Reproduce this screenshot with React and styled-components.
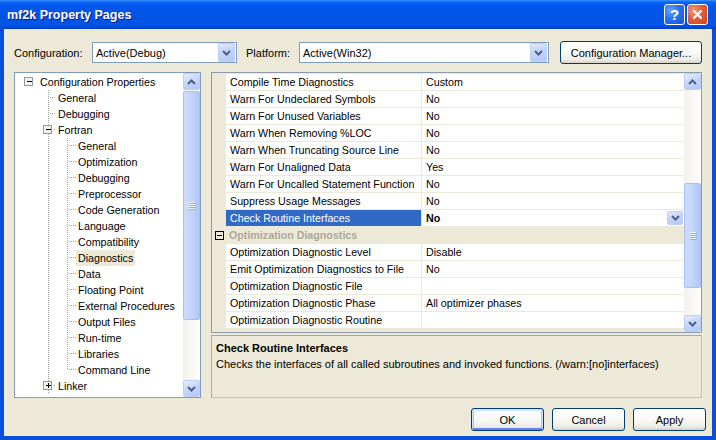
import React from "react";
import styled, { createGlobalStyle } from "styled-components";

const GlobalStyle = createGlobalStyle`
  html, body {
    margin: 0;
    padding: 0;
    background: #0054e3;
  }
  body {
    font-family: "Liberation Sans", Arial, sans-serif;
    font-size: 10.7px;
    color: #000;
  }
  * { box-sizing: border-box; }
`;

const FONT = `"Liberation Sans", Arial, sans-serif`;
const BEIGE = "#ece9d8";

const Window = styled.div`
  width: 716px;
  height: 440px;
  display: flex;
  flex-direction: column;
  overflow: hidden;
`;

const TitleBar = styled.div`
  height: 29px;
  flex: none;
  display: flex;
  align-items: center;
  padding: 0 8px 0 7px;
  background: linear-gradient(
    180deg,
    #3d95ff 0px,
    #0a66f5 2px,
    #0058ee 5px,
    #0054e6 14px,
    #0053e3 22px,
    #0058ea 25px,
    #0048d6 27px,
    #003fc4 29px
  );
`;

const Title = styled.div`
  flex: 1;
  color: #fff;
  font: bold 12.5px ${FONT};
  text-shadow: 1px 1px 0 #0f1a8a;
  padding-top: 1px;
`;

const CaptionButton = styled.div`
  width: 21px;
  height: 21px;
  margin-left: 2px;
  border: 1px solid #fff;
  border-radius: 3px;
  display: flex;
  align-items: center;
  justify-content: center;
  color: #fff;
  font: bold 15px ${FONT};
  background: ${(p) =>
    p.$close
      ? "radial-gradient(circle at 30% 30%, #f09a7a 0%, #e0603a 45%, #c8401c 100%)"
      : "radial-gradient(circle at 30% 30%, #6aa6ff 0%, #2a72f0 45%, #1553d8 100%)"};
`;

const Frame = styled.div`
  flex: 1;
  display: flex;
  flex-direction: column;
  background: ${BEIGE};
  border: 4px solid #0a4fd8;
  border-top: none;
  padding: 12px 10px 0 10px;
`;

const TopRow = styled.div`
  display: flex;
  align-items: center;
  height: 23px;
  font-size: 11px;
`;

const Label = styled.span`
  width: ${(p) => p.$w}px;
  margin-left: ${(p) => p.$ml || 0}px;
  flex: none;
`;

const Combo = styled.div`
  width: ${(p) => p.$w}px;
  height: 21px;
  flex: none;
  display: flex;
  align-items: center;
  border: 1px solid #7f9db9;
  background: #fff;
  padding-left: 3px;
`;

const ComboText = styled.span`
  flex: 1;
`;

const DropButton = styled.span`
  width: ${(p) => p.$w || 17}px;
  height: ${(p) => p.$h || 19}px;
  margin-right: ${(p) => p.$mr ?? 0}px;
  flex: none;
  display: flex;
  align-items: center;
  justify-content: center;
  border: 1px solid #bccdf7;
  border-radius: 2px;
  background: linear-gradient(160deg, #e3ebfd 0%, #c6d6fb 40%, #b3c8f5 100%);
`;

const Button = styled.div`
  width: ${(p) => p.$w || 73}px;
  height: 23px;
  flex: none;
  margin-left: ${(p) => p.$ml || 0}px;
  display: flex;
  align-items: center;
  justify-content: center;
  font-size: 11px;
  border: 1px solid #003c74;
  border-radius: 3px;
  background: linear-gradient(180deg, #ffffff 0%, #f7f7f3 55%, #ecebe4 85%, #d6d0c5 100%);
  box-shadow: ${(p) =>
    p.$default
      ? "inset 0 1px 0 1px #cee7ff, inset 0 -1px 0 1px #6982ee, inset 0 0 0 2px #a8c4f4"
      : "none"};
`;

const Main = styled.div`
  display: flex;
  height: 326px;
  margin-top: 8px;
  gap: 10px;
`;

const Tree = styled.div`
  width: 187px;
  flex: none;
  display: flex;
  border: 1px solid #7f9db9;
  background: #fff;
`;

const TreeList = styled.div`
  flex: 1;
  padding-top: 1px;
  overflow: hidden;
`;

const TreeRow = styled.div`
  height: 16px;
  display: flex;
  align-items: center;
`;

const TreeLabel = styled.span`
  padding: 0 2px;
  line-height: 16px;
  white-space: nowrap;
  background: ${(p) => (p.$selected ? BEIGE : "transparent")};
`;

const RightColumn = styled.div`
  flex: 1;
  display: flex;
  flex-direction: column;
  gap: 2px;
`;

const Grid = styled.div`
  height: 261px;
  flex: none;
  display: flex;
  border: 1px solid #8c9bab;
  background: ${BEIGE};
`;

const GridList = styled.div`
  flex: 1;
  overflow: hidden;
`;

const GridRow = styled.div`
  height: 17px;
  flex: none;
  display: flex;
  border-top: 1px solid ${BEIGE};
  background: ${(p) => (p.$category ? BEIGE : "#fff")};
`;

const Gutter = styled.div`
  width: 14px;
  flex: none;
  display: flex;
  align-items: center;
  justify-content: flex-end;
  padding-right: 2px;
  background: ${BEIGE};
`;

const NameCell = styled.div`
  width: 196px;
  flex: none;
  padding-left: 4px;
  line-height: 16px;
  white-space: nowrap;
  overflow: hidden;
  border-right: 1px solid ${BEIGE};
  background: ${(p) => (p.$selected ? "#316ac5" : "#fff")};
  color: ${(p) => (p.$selected ? "#fff" : "#000")};
`;

const ValueCell = styled.div`
  flex: 1;
  display: flex;
  align-items: center;
  padding-left: 4px;
  line-height: 16px;
  white-space: nowrap;
  font-weight: ${(p) => (p.$bold ? "bold" : "normal")};
`;

const ValueText = styled.span`
  flex: 1;
`;

const CategoryText = styled.div`
  padding-left: 3px;
  line-height: 16px;
  font-weight: bold;
  color: #aca899;
  white-space: nowrap;
`;

const Description = styled.div`
  flex: 1;
  border: 1px solid #aca899;
  border-bottom-color: #c5c2b2;
  border-right-color: #c5c2b2;
  padding: 5px 4px;
  font-size: 11px;
`;

const DescTitle = styled.div`
  font-weight: bold;
  line-height: 15px;
`;

const DescText = styled.div`
  line-height: 16px;
`;

const ButtonRow = styled.div`
  display: flex;
  justify-content: flex-end;
  margin-top: 10px;
  margin-right: -4px;
`;

/* scrollbar */
const Scroll = styled.div`
  width: ${(p) => p.$w || 17}px;
  flex: none;
  display: flex;
  flex-direction: column;
  background: linear-gradient(90deg, #f3f1ec 0%, #fefefb 100%);
`;

const ScrollArrow = styled.div`
  height: 17px;
  flex: none;
  display: flex;
  align-items: center;
  justify-content: center;
  border: 1px solid #bccdf7;
  border-radius: 2px;
  background: linear-gradient(160deg, #e6eefe 0%, #c8d8fc 45%, #b4c8f5 100%);
`;

const ScrollTrack = styled.div`
  flex: 1;
  display: flex;
  flex-direction: column;
`;

const Thumb = styled.div`
  flex: none;
  display: flex;
  align-items: center;
  justify-content: center;
  border: 1px solid #a9c0f3;
  border-radius: 2px;
  background: linear-gradient(90deg, #cddcfd 0%, #c2d4fb 50%, #b0c6f5 100%);
`;

const Chevron = ({ up, color = "#4d6185" }) => (
  <svg width="9" height="6" viewBox="0 0 9 6">
    <polyline
      points={up ? "1,5 4.5,1.5 8,5" : "1,1 4.5,4.5 8,1"}
      fill="none"
      stroke={color}
      strokeWidth="2"
    />
  </svg>
);

const Grip = () => (
  <svg width="8" height="8" viewBox="0 0 8 8" shapeRendering="crispEdges">
    {[0, 2, 4, 6].map((y) => (
      <g key={y}>
        <rect x="0" y={y} width="7" height="1" fill="#eef4fe" />
        <rect x="1" y={y + 1} width="7" height="1" fill="#8cb0f8" />
      </g>
    ))}
  </svg>
);

const Scrollbar = ({ thumbTop, thumbHeight }) => (
  <Scroll>
    <ScrollArrow>
      <Chevron up />
    </ScrollArrow>
    <ScrollTrack>
      <Thumb style={{ marginTop: thumbTop, height: thumbHeight }}>
        <Grip />
      </Thumb>
    </ScrollTrack>
    <ScrollArrow>
      <Chevron />
    </ScrollArrow>
  </Scroll>
);

/* tree guides */
const DOT = { stroke: "#a0a0a0", strokeWidth: 1, strokeDasharray: "1 1" };

const ExpandBox = ({ x, plus }) => (
  <g shapeRendering="crispEdges">
    <rect x={x - 4.5} y="3.5" width="8" height="8" fill="#f4f3ee" stroke="#8d9aa8" />
    <line x1={x - 2} y1="7.5" x2={x + 3} y2="7.5" stroke="#000" />
    {plus && <line x1={x + 0.5} y1="5" x2={x + 0.5} y2="10" stroke="#000" />}
  </g>
);

const Guides = ({ level, expander, lastChild }) => {
  const widths = [23, 41, 61];
  return (
    <svg width={widths[level]} height="16" style={{ flex: "none" }}>
      {level === 0 && <ExpandBox x={14} plus={expander === "plus"} />}
      {level >= 1 && (
        <line x1="33.5" y1="0" x2="33.5" y2="16" {...DOT} />
      )}
      {level === 1 && !expander && (
        <line x1="35" y1="7.5" x2="41" y2="7.5" {...DOT} />
      )}
      {level === 1 && expander && (
        <>
          <line x1="39" y1="7.5" x2="41" y2="7.5" {...DOT} />
          <ExpandBox x={33} plus={expander === "plus"} />
        </>
      )}
      {level === 2 && (
        <>
          <line x1="52.5" y1="0" x2="52.5" y2={lastChild ? 8 : 16} {...DOT} />
          <line x1="54" y1="7.5" x2="61" y2="7.5" {...DOT} />
        </>
      )}
    </svg>
  );
};

const treeItems = [
  { label: "Configuration Properties", level: 0, expander: "minus" },
  { label: "General", level: 1 },
  { label: "Debugging", level: 1 },
  { label: "Fortran", level: 1, expander: "minus" },
  { label: "General", level: 2 },
  { label: "Optimization", level: 2 },
  { label: "Debugging", level: 2 },
  { label: "Preprocessor", level: 2 },
  { label: "Code Generation", level: 2 },
  { label: "Language", level: 2 },
  { label: "Compatibility", level: 2 },
  { label: "Diagnostics", level: 2, selected: true },
  { label: "Data", level: 2 },
  { label: "Floating Point", level: 2 },
  { label: "External Procedures", level: 2 },
  { label: "Output Files", level: 2 },
  { label: "Run-time", level: 2 },
  { label: "Libraries", level: 2 },
  { label: "Command Line", level: 2, lastChild: true },
  { label: "Linker", level: 1, expander: "plus" },
];

const gridRows = [
  { name: "Compile Time Diagnostics", value: "Custom" },
  { name: "Warn For Undeclared Symbols", value: "No" },
  { name: "Warn For Unused Variables", value: "No" },
  { name: "Warn When Removing %LOC", value: "No" },
  { name: "Warn When Truncating Source Line", value: "No" },
  { name: "Warn For Unaligned Data", value: "Yes" },
  { name: "Warn For Uncalled Statement Function", value: "No" },
  { name: "Suppress Usage Messages", value: "No" },
  { name: "Check Routine Interfaces", value: "No", selected: true },
  { category: "Optimization Diagnostics" },
  { name: "Optimization Diagnostic Level", value: "Disable" },
  { name: "Emit Optimization Diagnostics to File", value: "No" },
  { name: "Optimization Diagnostic File", value: "" },
  { name: "Optimization Diagnostic Phase", value: "All optimizer phases" },
  { name: "Optimization Diagnostic Routine", value: "" },
  { category: "Language Usage Diagnostics" },
];

const CategoryBox = () => (
  <svg width="9" height="9" viewBox="0 0 9 9" shapeRendering="crispEdges">
    <rect x="0.5" y="0.5" width="8" height="8" fill={BEIGE} stroke="#000" />
    <line x1="2" y1="4.5" x2="7" y2="4.5" stroke="#000" />
  </svg>
);

const CloseGlyph = () => (
  <svg width="11" height="11" viewBox="0 0 11 11">
    <path d="M1.5 1.5 L9.5 9.5 M9.5 1.5 L1.5 9.5" stroke="#fff" strokeWidth="2.2" />
  </svg>
);

export default function App() {
  return (
    <>
      <GlobalStyle />
      <Window>
        <TitleBar>
          <Title>mf2k Property Pages</Title>
          <CaptionButton>?</CaptionButton>
          <CaptionButton $close>
            <CloseGlyph />
          </CaptionButton>
        </TitleBar>
        <Frame>
          <TopRow>
            <Label $w={78}>Configuration:</Label>
            <Combo $w={145}>
              <ComboText>Active(Debug)</ComboText>
              <DropButton $mr={1}>
                <Chevron />
              </DropButton>
            </Combo>
            <Label $w={53} $ml={9}>
              Platform:
            </Label>
            <Combo $w={250}>
              <ComboText>Active(Win32)</ComboText>
              <DropButton $mr={1}>
                <Chevron />
              </DropButton>
            </Combo>
            <Button $w={142} $ml={11}>
              Configuration Manager...
            </Button>
          </TopRow>

          <Main>
            <Tree>
              <TreeList>
                {treeItems.map((it, i) => (
                  <TreeRow key={i}>
                    <Guides level={it.level} expander={it.expander} lastChild={it.lastChild} />
                    <TreeLabel $selected={it.selected}>{it.label}</TreeLabel>
                  </TreeRow>
                ))}
              </TreeList>
              <Scrollbar thumbTop={1} thumbHeight={229} />
            </Tree>

            <RightColumn>
              <Grid>
                <GridList>
                  {gridRows.map((r, i) =>
                    r.category ? (
                      <GridRow key={i} $category>
                        <Gutter>
                          <CategoryBox />
                        </Gutter>
                        <CategoryText>{r.category}</CategoryText>
                      </GridRow>
                    ) : (
                      <GridRow key={i}>
                        <Gutter />
                        <NameCell $selected={r.selected}>{r.name}</NameCell>
                        <ValueCell $bold={r.selected}>
                          <ValueText>{r.value}</ValueText>
                          {r.selected && (
                            <DropButton $w={16} $h={14} $mr={1}>
                              <Chevron />
                            </DropButton>
                          )}
                        </ValueCell>
                      </GridRow>
                    )
                  )}
                </GridList>
                <Scrollbar thumbTop={93} thumbHeight={105} />
              </Grid>
              <Description>
                <DescTitle>Check Routine Interfaces</DescTitle>
                <DescText>
                  Checks the interfaces of all called subroutines and invoked functions.
                  (/warn:[no]interfaces)
                </DescText>
              </Description>
            </RightColumn>
          </Main>

          <ButtonRow>
            <Button $default>OK</Button>
            <Button $ml={8}>Cancel</Button>
            <Button $ml={8}>Apply</Button>
          </ButtonRow>
        </Frame>
      </Window>
    </>
  );
}
